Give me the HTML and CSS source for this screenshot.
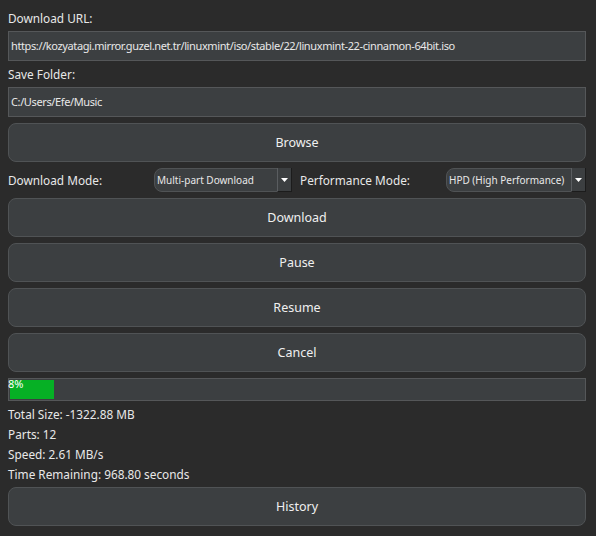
FILE: index.html
```html
<!DOCTYPE html>
<html>
<head>
<meta charset="utf-8">
<link rel="stylesheet" href="styles.css">
</head>
<body>
<div class="app">
  <div class="label">Download URL:</div>
  <div class="input">https://kozyatagi.mirror.guzel.net.tr/linuxmint/iso/stable/22/linuxmint-22-cinnamon-64bit.iso</div>
  <div class="label">Save Folder:</div>
  <div class="input">C:/Users/Efe/Music</div>
  <div class="btn btn-first">Browse</div>
  <div class="mode-row">
    <div class="mode-label">Download Mode:</div>
    <div class="combo combo-dl">
      <span class="combo-text">Multi-part Download</span>
      <span class="combo-arrow"><svg width="7" height="4" viewBox="0 0 7 4"><path d="M0 0H7L3.5 4Z" fill="#ffffff"/></svg></span>
    </div>
    <div class="mode-label perf">Performance Mode:</div>
    <div class="combo combo-pf">
      <span class="combo-text">HPD (High Performance)</span>
      <span class="combo-arrow"><svg width="7" height="4" viewBox="0 0 7 4"><path d="M0 0H7L3.5 4Z" fill="#ffffff"/></svg></span>
    </div>
  </div>
  <div class="btn">Download</div>
  <div class="btn">Pause</div>
  <div class="btn">Resume</div>
  <div class="btn">Cancel</div>
  <div class="progress">
    <div class="chunk" style="width: 44px"></div>
    <span class="pct">8%</span>
  </div>
  <div class="info">
    <div class="info-line">Total Size: -1322.88 MB</div>
    <div class="info-line">Parts: 12</div>
    <div class="info-line">Speed: 2.61 MB/s</div>
    <div class="info-line">Time Remaining: 968.80 seconds</div>
  </div>
  <div class="btn btn-history">History</div>
</div>
</body>
</html>
```
FILE: styles.css
```css
html, body {
  margin: 0;
  padding: 0;
  background: #2b2b2b;
}
body {
  font-family: "Noto Sans", "Liberation Sans", sans-serif;
  font-size: 11.8px;
  color: #e8e8e8;
}
.app {
  display: flex;
  flex-direction: column;
  padding: 8px 10px 0 8px;
  width: 578px;
}
.label {
  height: 20px;
  line-height: 20px;
  margin-bottom: 3px;
}
.input {
  box-sizing: border-box;
  height: 30px;
  line-height: 28px;
  border: 1px solid #555759;
  background: #3c3f41;
  padding: 0 2px;
  margin-bottom: 3px;
  white-space: nowrap;
  overflow: hidden;
  font-size: 11px;
  letter-spacing: -0.38px;
}
.btn {
  box-sizing: border-box;
  height: 39px;
  margin-top: 6px;
  border: 1px solid #505355;
  border-radius: 8px;
  background: #3c3f41;
  display: flex;
  align-items: center;
  justify-content: center;
  font-size: 12.5px;
  color: #f0f0f0;
}
.btn-first {
  margin-top: 3px;
}
.mode-row {
  display: flex;
  align-items: center;
  height: 24px;
  margin-top: 6px;
}
.mode-label {
  width: 146px;
}
.mode-label.perf {
  width: 146px;
  margin-left: 8px;
}
.combo {
  box-sizing: border-box;
  height: 24px;
  display: flex;
  align-items: stretch;
  border: 1px solid #505355;
  border-radius: 8px 0 0 8px;
  background: #3c3f41;
  font-size: 10px;
}
.combo-dl {
  width: 138px;
}
.combo-pf {
  width: 140px;
  margin-left: auto;
}
.combo-text {
  flex: 1;
  display: flex;
  align-items: center;
  padding-left: 2px;
  white-space: nowrap;
  overflow: hidden;
}
.combo-arrow {
  box-sizing: border-box;
  width: 15px;
  display: flex;
  align-items: center;
  justify-content: center;
  background: #3c3f41;
  border-left: 1px solid #5a5d60;
  border-right: 1px solid #1c1c1c;
  border-bottom: 1px solid #1c1c1c;
  margin: -1px -1px -1px 0;
}
.progress {
  position: relative;
  box-sizing: border-box;
  height: 23px;
  margin-top: 6px;
  border: 1px solid #555759;
  background: #3c3f41;
  padding: 1px;
}
.chunk {
  height: 100%;
  background: #06b025;
}
.pct {
  position: absolute;
  left: -1px;
  top: -2px;
  line-height: 14px;
  font-size: 11px;
  color: #ffffff;
}
.info {
  margin-top: 3px;
}
.info-line {
  height: 20px;
  line-height: 20px;
}
.btn-history {
  margin-top: 3px;
}
```
